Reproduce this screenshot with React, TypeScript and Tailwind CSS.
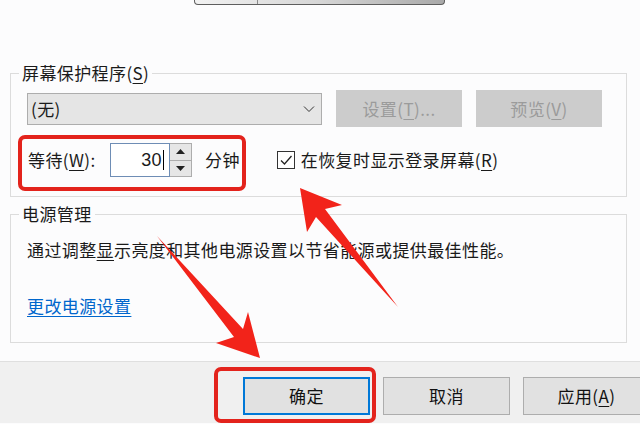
import React from 'react';

const font = { fontFamily: '"Noto Sans CJK SC", "Noto Sans", sans-serif' };

const U = ({ children }: { children: React.ReactNode }) => (
  <span className="underline underline-offset-[3px] decoration-1">{children}</span>
);

const WinButton = ({ label, focused }: { label: React.ReactNode; focused?: boolean }) => (
  <button
    className={
      'w-[127px] h-[38px] shrink-0 bg-[#e1e1e1] text-[17px] leading-[20px] text-[#111] ' +
      (focused ? 'border-2 border-[#0078d7]' : 'border border-[#adadad]')
    }
  >
    {label}
  </button>
);

export default function App() {
  return (
    <div className="relative w-[640px] h-[424px] overflow-hidden bg-[#fcfcfd] text-[#1a1a1a] tracking-[0.4px]" style={font}>
      {/* bottom edge of the monitor preview */}
      <div className="relative ml-[194px] w-[251px] h-[5px] rounded-b-[4px] border-x border-b border-[#5e5e5e] bg-gradient-to-r from-[#f2f2f2] via-[#d6d6d6] to-[#a9a9a9]">
        <div className="absolute left-[62px] top-0 h-full w-px bg-[#8a8a8a]" />
      </div>

      {/* screen saver group */}
      <fieldset className="ml-[10px] mt-[58px] w-[617px] border border-[#dcdcdc] px-[16px] pt-[7px] pb-[19px]">
        <legend className="-ml-[8px] px-[3px] text-[17px] leading-[20px]">
          屏幕保护程序(<U>S</U>)
        </legend>

        <div className="flex items-center">
          <div className="flex items-center justify-between w-[295px] h-[32px] bg-[#e5e5e5] border border-[#adadad] pl-[3px] pr-[6px] text-[17px] leading-[20px]">
            <span>(无)</span>
            <svg width="12" height="8" viewBox="0 0 12 8" fill="none" stroke="#333" strokeWidth="1">
              <path d="M1 1.5 L6 6.5 L11 1.5" />
            </svg>
          </div>
          <div className="ml-[14px] w-[126px] h-[37px] bg-[#cccccc] flex items-center justify-center text-[17px] leading-[20px] text-[#9b9b9b]">
            设置(<U>T</U>)...
          </div>
          <div className="ml-[14px] w-[126px] h-[37px] bg-[#cccccc] flex items-center justify-center text-[17px] leading-[20px] text-[#9b9b9b]">
            预览(<U>V</U>)
          </div>
        </div>

        <div className="mt-[16px] flex items-center text-[17px] leading-[20px]">
          <span className="w-[83px] pl-[1px]">
            等待(<U>W</U>):
          </span>
          <div className="flex items-center justify-end w-[60px] h-[34px] border border-[#6e8db5] bg-white pr-[5px]">
            <span className="font-['Liberation_Sans'] text-[18px]">30</span>
            <span className="ml-[1px] w-px h-[20px] bg-black" />
          </div>
          <div className="flex flex-col w-[22px] h-[34px] border border-[#adadad] border-l-0">
            <div className="flex-1 flex items-center justify-center bg-[#e6e6e6] border-b border-[#adadad]">
              <svg width="9" height="5" viewBox="0 0 9 5"><path d="M0 5 L4.5 0 L9 5 Z" fill="#222" /></svg>
            </div>
            <div className="flex-1 flex items-center justify-center bg-[#e6e6e6]">
              <svg width="9" height="5" viewBox="0 0 9 5"><path d="M0 0 L4.5 5 L9 0 Z" fill="#222" /></svg>
            </div>
          </div>
          <span className="ml-[13px]">分钟</span>

          <div className="ml-[37px] flex items-center">
            <div className="w-[18px] h-[18px] border border-[#333] bg-white flex items-center justify-center">
              <svg width="14" height="14" viewBox="0 0 14 14" fill="none" stroke="#222" strokeWidth="1.3">
                <path d="M2 7.5 L5.5 11 L12.5 3" />
              </svg>
            </div>
            <span className="ml-[6px]">
              在恢复时显示登录屏幕(<U>R</U>)
            </span>
          </div>
        </div>
      </fieldset>

      {/* power group */}
      <fieldset className="ml-[10px] mt-[7px] w-[617px] border border-[#dcdcdc] px-[16px] pt-[16px] pb-[26px]">
        <legend className="-ml-[8px] px-[3px] text-[17px] leading-[20px]">电源管理</legend>
        <p className="text-[17px] leading-[20px]">
          通过调整<U>显</U>示亮度和其他电源设置以节省能源或提供最佳性能。
        </p>
        <a className="block mt-[36px] w-fit text-[17px] leading-[20px] text-[#0066cc] underline underline-offset-[3px] decoration-1">
          更改电源设置
        </a>
      </fieldset>

      {/* footer */}
      <div className="mt-[18px] h-[62px] border-t border-[#dfdfdf] bg-[#f0f0f0] pt-[15px] pl-[243px] flex gap-[13px]">
        <WinButton label="确定" focused />
        <WinButton label="取消" />
        <WinButton label={<>应用(<U>A</U>)</>} />
      </div>

      {/* annotations */}
      <div className="absolute left-[18px] top-[135px] w-[228px] h-[56px] border-[4px] border-[#e3231c] rounded-[7px]" />
      <div className="absolute left-[214px] top-[367px] w-[162px] h-[56px] border-[4px] border-[#e3231c] rounded-[7px]" />
      <svg className="absolute left-0 top-0" width="640" height="424" viewBox="0 0 640 424">
        <polygon points="300,188 342,205 325,209 398,307 316,217 307,232" fill="#f2231a" />
        <polygon points="260,358 248,312 243,329 157,236 234,337 216,343" fill="#f2231a" />
      </svg>
    </div>
  );
}
